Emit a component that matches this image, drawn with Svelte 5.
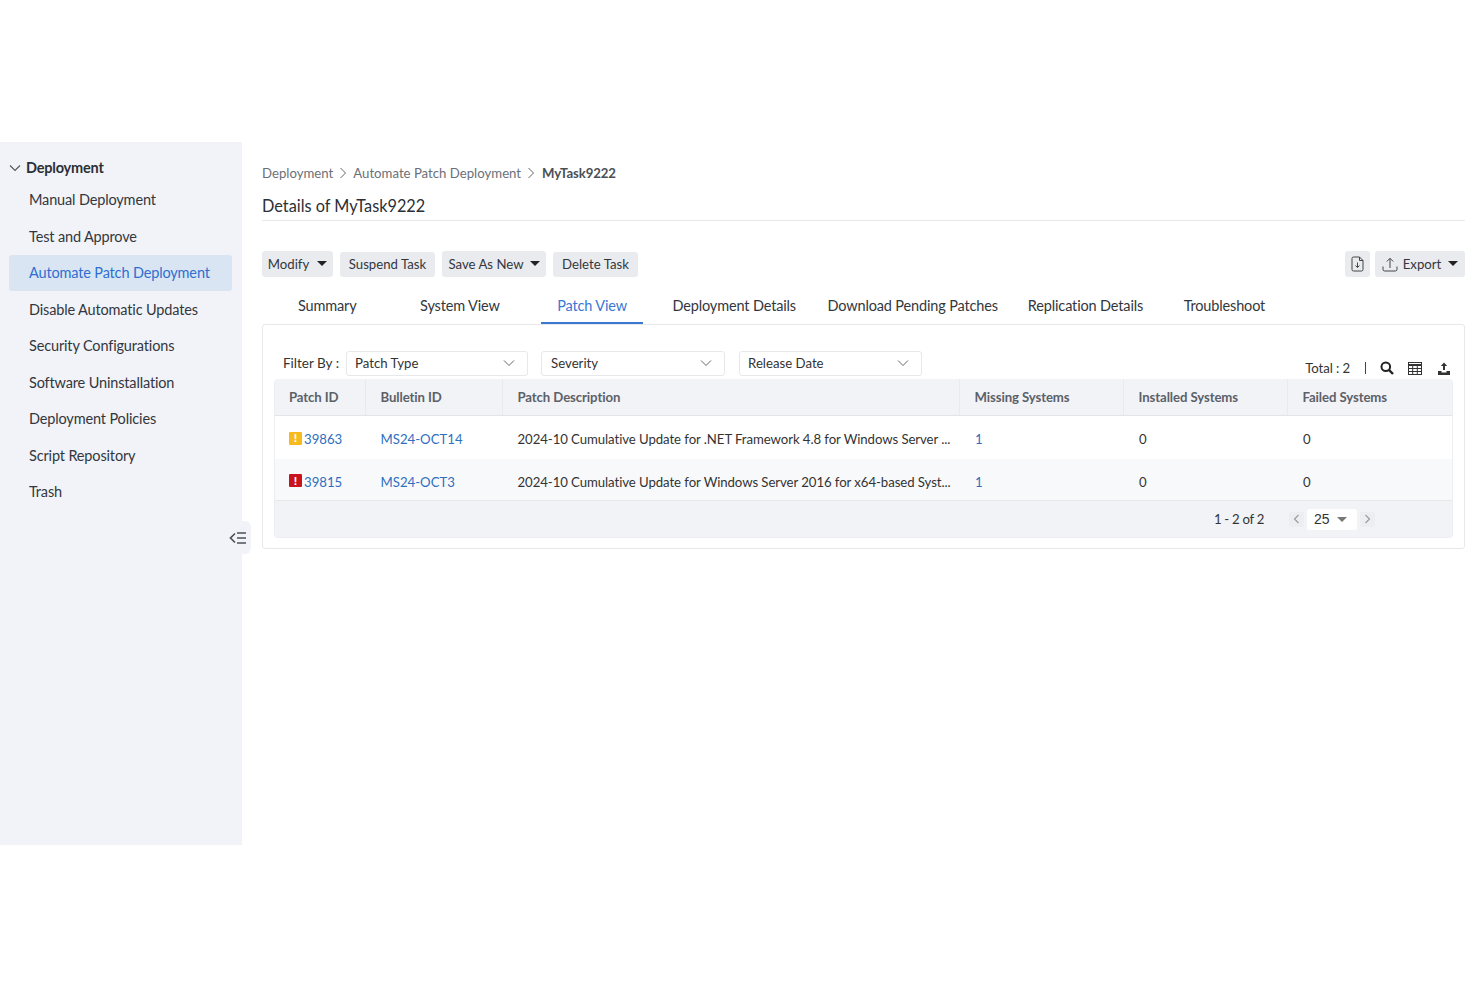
<script>
  const menu = [
    "Manual Deployment",
    "Test and Approve",
    "Automate Patch Deployment",
    "Disable Automatic Updates",
    "Security Configurations",
    "Software Uninstallation",
    "Deployment Policies",
    "Script Repository",
    "Trash"
  ];
  const tabs = ["Summary", "System View", "Patch View", "Deployment Details", "Download Pending Patches", "Replication Details", "Troubleshoot"];
  const filters = ["Patch Type", "Severity", "Release Date"];
  const columns = ["Patch ID", "Bulletin ID", "Patch Description", "Missing Systems", "Installed Systems", "Failed Systems"];
  const rows = [
    { id: "39863", level: "warn", bulletin: "MS24-OCT14", desc: "2024-10 Cumulative Update for .NET Framework 4.8 for Windows Server ...", missing: 1, installed: 0, failed: 0 },
    { id: "39815", level: "crit", bulletin: "MS24-OCT3", desc: "2024-10 Cumulative Update for Windows Server 2016 for x64-based Syst...", missing: 1, installed: 0, failed: 0 }
  ];
</script>

<div class="page">
  <aside class="side">
    <div class="side-head">
      <svg width="12" height="12" viewBox="0 0 12 12"><path d="M1 3.500l5 5 5-5" fill="none" stroke="#555" stroke-width="1.100" /></svg>
      <span>Deployment</span>
    </div>
    {#each menu as m (m)}
      <div class="side-item" class:active={m === "Automate Patch Deployment"}>{m}</div>
    {/each}
    <div class="collapse">
      <svg width="18" height="14" viewBox="0 0 18 14">
        <path d="M6 2.500L1.500 7 6 11.500" fill="none" stroke="#4d5259" stroke-width="1.700" />
        <path d="M8 2h9M8 7h9M8 12h9" fill="none" stroke="#4d5259" stroke-width="1.500" />
      </svg>
    </div>
  </aside>

  <main class="main">
    <div class="crumbs">
      <span>Deployment</span>
      <svg width="8" height="12" viewBox="0 0 8 12"><path d="M1.500 1l5 5-5 5" fill="none" stroke="#666" stroke-width="1" /></svg>
      <span>Automate Patch Deployment</span>
      <svg width="8" height="12" viewBox="0 0 8 12"><path d="M1.500 1l5 5-5 5" fill="none" stroke="#666" stroke-width="1" /></svg>
      <b>MyTask9222</b>
    </div>
    <h1>Details of MyTask9222</h1>

    <div class="actions">
      <button class="btn b-modify">Modify <i class="caret"></i></button>
      <button class="btn b-suspend">Suspend Task</button>
      <button class="btn b-save">Save As New <i class="caret"></i></button>
      <button class="btn b-delete">Delete Task</button>
      <button class="btn b-pdf" aria-label="Download">
        <svg width="14" height="16" viewBox="0 0 14 16">
          <path d="M2.500 1h6l3.500 3.500V13.500a1.500 1.500 0 0 1-1.500 1.500h-8A1.500 1.500 0 0 1 1 13.500V2.500A1.500 1.500 0 0 1 2.500 1z" fill="none" stroke="#444" stroke-width="1" />
          <path d="M8.500 1v3.500H12M6.500 6.500v5M4.500 9.500l2 2 2-2" fill="none" stroke="#444" stroke-width="1" />
        </svg>
      </button>
      <button class="btn b-export">
        <svg width="16" height="15" viewBox="0 0 16 15">
          <path d="M8 11V1.500M4.800 4.500L8 1.300l3.200 3.200M1 9.500v2.800A1.700 1.700 0 0 0 2.700 14h10.600a1.700 1.700 0 0 0 1.700-1.700V9.500" fill="none" stroke="#444" stroke-width="1" />
        </svg>
        Export <i class="caret"></i>
      </button>
    </div>

    <nav class="tabs">
      {#each tabs as t (t)}
        <div class="tab" class:on={t === "Patch View"}>{t}</div>
      {/each}
    </nav>

    <section class="card">
      <div class="filters">
        <span class="flabel">Filter By :</span>
        {#each filters as f (f)}
          <div class="select">
            <span>{f}</span>
            <svg width="12" height="8" viewBox="0 0 12 8"><path d="M1 1.500l5 5 5-5" fill="none" stroke="#666" stroke-width="1" /></svg>
          </div>
        {/each}
        <div class="tools">
          <span>Total : 2</span>
          <i class="bar"></i>
          <svg class="search" width="14" height="14" viewBox="0 0 14 14"><circle cx="5.800" cy="5.800" r="4.300" fill="none" stroke="#222" stroke-width="2" /><path d="M9 9l4 4" stroke="#222" stroke-width="2.400" /></svg>
          <svg width="14" height="13" viewBox="0 0 14 13">
            <rect x="0.500" y="0.500" width="13" height="12" fill="none" stroke="#333" />
            <path d="M0 3h14" stroke="#333" stroke-width="2" />
            <path d="M0 6.500h14M0 9.500h14M4.700 3v10M9.300 3v10" stroke="#333" stroke-width="1" />
          </svg>
          <svg width="14" height="13" viewBox="0 0 14 13">
            <path d="M7 0.500L3.800 4h2.200v4h2V4h2.200z" fill="#333" />
            <path d="M1 9h3.500v1.500h5V9H13v4H1z" fill="#333" />
          </svg>
        </div>
      </div>

      <div class="table">
        <div class="row head">
          {#each columns as c (c)}
            <div class="cell">{c}</div>
          {/each}
        </div>
        {#each rows as r, i (r.id)}
          <div class="row body" class:alt={i === 1}>
            <div class="cell idcell">
              <span class="sev {r.level}">!</span><a href="#top">{r.id}</a>
            </div>
            <div class="cell"><a href="#top">{r.bulletin}</a></div>
            <div class="cell desc">{r.desc}</div>
            <div class="cell num"><a href="#top">{r.missing}</a></div>
            <div class="cell num">{r.installed}</div>
            <div class="cell num">{r.failed}</div>
          </div>
        {/each}
        <div class="foot">
          <span class="range">1 - 2 of 2</span>
          <span class="pg"><svg width="7" height="10" viewBox="0 0 7 10"><path d="M5.500 1L1.500 5l4 4" fill="none" stroke="#999" stroke-width="1.100" /></svg></span>
          <span class="size">25 <i class="caret grey"></i></span>
          <span class="pg"><svg width="7" height="10" viewBox="0 0 7 10"><path d="M1.500 1l4 4-4 4" fill="none" stroke="#999" stroke-width="1.100" /></svg></span>
        </div>
      </div>
    </section>
  </main>
</div>

<style>
  :global(body) {
    margin: 0;
    background: #fff;
  }
  .page {
    display: flex;
    align-items: flex-start;
    height: 987px;
    padding-top: 142px;
    box-sizing: border-box;
    font-family: Lato, "Liberation Sans", sans-serif;
    color: #333;
    font-size: 13.200px;
  }
  .side {
    position: relative;
    flex: none;
    width: 242px;
    height: 703px;
    box-sizing: border-box;
    padding: 16.500px 10px 0 9px;
    background: #f1f3f8;
  }
  .side-head {
    display: flex;
    align-items: center;
    gap: 5px;
    height: 18px;
    margin-bottom: 5px;
    font-size: 14.500px;
    letter-spacing: -0.200px;
    font-weight: 700;
    color: #2b2f36;
  }
  .side-item {
    display: flex;
    align-items: center;
    height: 36.500px;
    padding-left: 20px;
    font-size: 14.500px;
    letter-spacing: -0.150px;
    color: #33373d;
    border-radius: 3px;
  }
  .side-item.active {
    background: #d9e5f2;
    color: #2f6fd0;
  }
  .collapse {
    position: absolute;
    top: 379px;
    right: -9px;
    display: flex;
    align-items: center;
    justify-content: center;
    width: 30px;
    height: 33px;
    box-sizing: border-box;
    padding-left: 4px;
    border-radius: 0 6px 6px 0;
    background: #f1f3f8;
  }
  .main {
    flex: 1;
    min-width: 0;
    padding: 22px 15px 0 20px;
  }
  .crumbs {
    display: flex;
    align-items: center;
    height: 18px;
    gap: 6px;
    font-size: 13.200px;
    color: #6b7078;
  }
  .crumbs b {
    color: #4a4f56;
    margin-left: 1px;
    letter-spacing: -0.100px;
  }
  h1 {
    margin: 0;
    height: 39px;
    padding-top: 11.500px;
    box-sizing: border-box;
    line-height: 24px;
    font-size: 16.300px;
    font-weight: 400;
    color: #2b2f36;
    border-bottom: 1px solid #e6e8ec;
  }
  .actions {
    display: flex;
    align-items: center;
    gap: 7px;
    margin-top: 30px;
  }
  .btn {
    display: flex;
    align-items: center;
    justify-content: center;
    height: 26px;
    padding: 0;
    border: none;
    border-radius: 3px;
    background: #e9ebef;
    font: inherit;
    color: #33373d;
  }
  .b-modify {
    width: 71px;
    gap: 8px;
  }
  .b-suspend {
    width: 95px;
    height: 25px;
  }
  .b-save {
    width: 104px;
    gap: 6px;
  }
  .b-delete {
    width: 85px;
    height: 25px;
  }
  .b-pdf {
    width: 25px;
    margin-left: auto;
    margin-right: -2px;
  }
  .b-export {
    width: 90px;
    gap: 5px;
  }
  .b-export .caret {
    margin-left: 2px;
  }
  .caret {
    display: inline-block;
    width: 0;
    height: 0;
    border-left: 5px solid transparent;
    border-right: 5px solid transparent;
    border-top: 5px solid #222;
    margin-bottom: 2px;
  }
  .caret.grey {
    border-top-color: #777;
    margin: 0 0 0 7px;
  }
  .tabs {
    display: flex;
    height: 47px;
    margin-top: 3px;
    font-size: 14.500px;
    letter-spacing: -0.150px;
    color: #33373d;
  }
  .tab {
    display: flex;
    align-items: center;
    height: 44px;
    padding: 8px 16px 0;
    box-sizing: border-box;
    border-bottom: 2px solid transparent;
  }
  .tab:nth-child(1) {
    margin-left: 20px;
  }
  .tab:nth-child(2) {
    margin-left: 31.500px;
  }
  .tab:nth-child(3) {
    margin-left: 25.500px;
  }
  .tab:nth-child(4) {
    margin-left: 13.500px;
  }
  .tab:nth-child(5) {
    margin-left: -0.500px;
  }
  .tab:nth-child(6) {
    margin-left: -2px;
  }
  .tab:nth-child(7) {
    margin-left: 8.500px;
  }
  .tab.on {
    color: #3a78d4;
    border-bottom-color: #3a78d4;
  }
  .card {
    height: 225px;
    margin-top: -3px;
    box-sizing: border-box;
    padding: 0 11px;
    border: 1px solid #e6e8ec;
    border-radius: 3px;
  }
  .filters {
    display: flex;
    align-items: center;
    height: 54px;
    padding: 22px 2px 0 9px;
    box-sizing: border-box;
  }
  .flabel {
    font-size: 13.500px;
    margin-right: 7px;
  }
  .select {
    display: flex;
    align-items: center;
    justify-content: space-between;
    height: 25px;
    width: 182px;
    box-sizing: border-box;
    padding: 0 12px 0 8px;
    margin-right: 13px;
    border: 1px solid #e6e8ec;
    border-radius: 3px;
  }
  .select:nth-child(3) {
    width: 184px;
    margin-right: 14px;
    padding-left: 9px;
  }
  .select:nth-child(4) {
    width: 183px;
  }
  .tools {
    display: flex;
    align-items: center;
    gap: 15px;
    margin-left: auto;
    padding-top: 10px;
    letter-spacing: -0.100px;
  }
  .bar {
    width: 1px;
    height: 12px;
    margin-right: -2px;
    background: #444;
  }
  .search {
    margin: 0 -1px 0 1px;
  }
  .table {
    height: 158px;
    border: 1px solid #eceef2;
    border-top: none;
    border-radius: 4px;
    overflow: hidden;
  }
  .row {
    display: grid;
    grid-template-columns: 91px 137px 457px 164px 164px 1fr;
  }
  .head {
    height: 36px;
    background: #f2f3f7;
    border-bottom: 1px solid #e2e4e9;
    font-weight: 700;
    letter-spacing: -0.100px;
    color: #5c6168;
  }
  .head .cell {
    border-right: 1px solid #e8eaee;
  }
  .head .cell:last-child {
    border-right: none;
  }
  .cell {
    display: flex;
    align-items: center;
    padding-left: 14.500px;
    white-space: nowrap;
    overflow: hidden;
  }
  .head .cell:first-child,
  .idcell {
    padding-left: 14px;
  }
  .desc {
    letter-spacing: -0.070px;
  }
  .body {
    height: 43px;
    padding-top: 3px;
    box-sizing: border-box;
  }
  .body.alt {
    height: 41px;
    padding-top: 4px;
    background: #f8f9fb;
  }
  .num {
    padding-left: 15px;
  }
  a {
    color: #2f6fc0;
    text-decoration: none;
  }
  .sev {
    display: inline-flex;
    align-items: center;
    justify-content: center;
    flex: none;
    width: 13px;
    height: 13px;
    margin: -2px 2px 0 0;
    border-radius: 1px;
    color: #fff;
    font-size: 12px;
    font-weight: 900;
    line-height: 1;
  }
  .sev.warn {
    background: #f7bb1e;
  }
  .sev.crit {
    background: #c9141e;
  }
  .foot {
    display: flex;
    align-items: center;
    justify-content: flex-end;
    height: 37px;
    padding-right: 77px;
    background: #f1f3f7;
    border-top: 1px solid #e6e8ec;
    box-sizing: border-box;
  }
  .range {
    margin-right: 25px;
    letter-spacing: -0.300px;
  }
  .pg {
    display: flex;
    align-items: center;
    justify-content: center;
    width: 15px;
    height: 15px;
    background: #eceef2;
  }
  .size {
    display: flex;
    align-items: center;
    width: 50px;
    height: 21px;
    box-sizing: border-box;
    padding-left: 7px;
    margin: 0 3px;
    background: #fff;
    border-radius: 2px;
    font-family: "Liberation Sans", sans-serif;
    font-size: 14px;
  }
</style>
